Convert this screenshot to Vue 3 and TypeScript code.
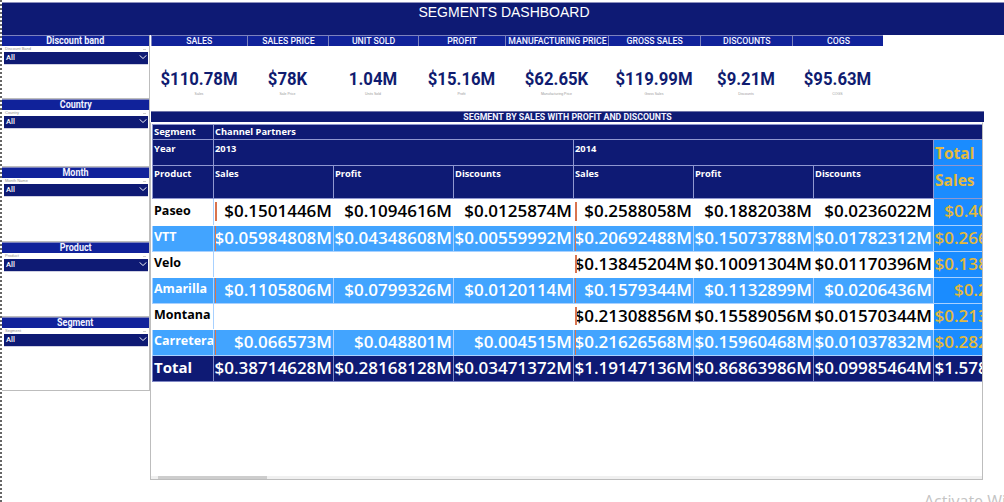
<script setup lang="ts">
interface Kpi {
  head: string
  value: string
  label: string
}

interface Row {
  name: string
  cells: string[]
  total: string
  alt?: boolean
}

const slicers = [
  { title: 'Discount band', label: 'Discount Band' },
  { title: 'Country', label: 'Country' },
  { title: 'Month', label: 'Month Name' },
  { title: 'Product', label: 'Product' },
  { title: 'Segment', label: 'Segment' }
]

const kpis: Kpi[] = [
  { head: 'SALES', value: '$110.78M', label: 'Sales' },
  { head: 'SALES PRICE', value: '$78K', label: 'Sale Price' },
  { head: 'UNIT SOLD', value: '1.04M', label: 'Units Sold' },
  { head: 'PROFIT', value: '$15.16M', label: 'Profit' },
  { head: 'MANUFACTURING PRICE', value: '$62.65K', label: 'Manufacturing Price' },
  { head: 'GROSS SALES', value: '$119.99M', label: 'Gross Sales' },
  { head: 'DISCOUNTS', value: '$9.21M', label: 'Discounts' },
  { head: 'COGS', value: '$95.63M', label: 'COGS' }
]

const measures = ['Sales', 'Profit', 'Discounts', 'Sales', 'Profit', 'Discounts']

const rows: Row[] = [
  { name: 'Paseo', cells: ['$0.1501446M', '$0.1094616M', '$0.0125874M', '$0.2588058M', '$0.1882038M', '$0.0236022M'], total: '$0.4089504M' },
  { name: 'VTT', alt: true, cells: ['$0.05984808M', '$0.04348608M', '$0.00559992M', '$0.20692488M', '$0.15073788M', '$0.01782312M'], total: '$0.26677296M' },
  { name: 'Velo', cells: ['', '', '', '$0.13845204M', '$0.10091304M', '$0.01170396M'], total: '$0.13845204M' },
  { name: 'Amarilla', alt: true, cells: ['$0.1105806M', '$0.0799326M', '$0.0120114M', '$0.1579344M', '$0.1132899M', '$0.0206436M'], total: '$0.268515M' },
  { name: 'Montana', cells: ['', '', '', '$0.21308856M', '$0.15589056M', '$0.01570344M'], total: '$0.21308856M' },
  { name: 'Carretera', alt: true, cells: ['$0.066573M', '$0.048801M', '$0.004515M', '$0.21626568M', '$0.15960468M', '$0.01037832M'], total: '$0.28283868M' }
]

const totals = ['$0.38714628M', '$0.28168128M', '$0.03471372M', '$1.19147136M', '$0.86863986M', '$0.09985464M']
</script>

<template>
  <div class="page">
    <header class="title">SEGMENTS DASHBOARD</header>

    <div class="body">
      <aside class="sidebar">
        <section v-for="s in slicers" :key="s.title" class="slicer">
          <h3 class="slicer-head"><span>{{ s.title }}</span></h3>
          <div class="slicer-label">
            <span>{{ s.label }}</span>
            <i></i>
          </div>
          <div class="select">
            <span>All</span>
            <svg viewBox="0 0 8 4" width="8" height="4" fill="none" aria-hidden="true">
              <path d="M0.5 0.3L4 3.5L7.5 0.3" stroke="currentColor" stroke-width="0.9" />
            </svg>
          </div>
        </section>
      </aside>

      <main class="main">
        <div class="kpis">
          <div v-for="k in kpis" :key="k.head" class="kpi">
            <div class="kpi-head"><span>{{ k.head }}</span></div>
            <div class="kpi-body">
              <div class="kpi-value">{{ k.value }}</div>
              <div class="kpi-label">{{ k.label }}</div>
            </div>
          </div>
        </div>

        <div class="matrix-title">SEGMENT BY SALES WITH PROFIT AND DISCOUNTS</div>

        <div class="matrix">
          <table>
            <colgroup>
              <col class="col-name" />
              <col v-for="n in 7" :key="n" class="col-val" />
            </colgroup>
            <thead>
              <tr class="h1">
                <th>Segment</th>
                <th colspan="7">Channel Partners</th>
              </tr>
              <tr class="h2">
                <th>Year</th>
                <th colspan="3">2013</th>
                <th colspan="3">2014</th>
                <th class="gold"><span>Total</span></th>
              </tr>
              <tr class="h3">
                <th>Product</th>
                <th v-for="(m, i) in measures" :key="i">{{ m }}</th>
                <th class="gold"><span>Sales</span></th>
              </tr>
            </thead>
            <tbody>
              <tr v-for="r in rows" :key="r.name" :class="{ alt: r.alt }">
                <td class="name">{{ r.name }}</td>
                <td
                  v-for="(c, i) in r.cells"
                  :key="i"
                  class="val"
                  :class="{ bar: i === 3 || (c && i === 0) }"
                >{{ c }}</td>
                <td class="val gold">{{ r.total }}</td>
              </tr>
              <tr class="grand">
                <td class="name">Total</td>
                <td v-for="(t, i) in totals" :key="i" class="val">{{ t }}</td>
                <td class="val">$1.57861764M</td>
              </tr>
            </tbody>
          </table>
          <div class="scrollbar"><i></i></div>
        </div>
      </main>
    </div>

    <div class="watermark">Activate Windows</div>
  </div>
</template>

<style scoped>
.page {
  position: relative;
  width: 1004px;
  height: 502px;
  box-sizing: border-box;
  padding-top: 2px;
  padding-left: 2px;
  background: repeating-linear-gradient(#666 0 2px, #fff 2px 4px) left top / 2px 100% no-repeat #fff;
  overflow: hidden;
  font-family: 'Open Sans', 'Liberation Sans', sans-serif;
}

.title {
  height: 33px;
  box-sizing: border-box;
  padding: 1px 0 0 2px;
  border-top: 1px solid #8d90bd;
  background: #0e1a74;
  color: #fff;
  font: 14px/17px 'Liberation Sans', sans-serif;
  text-align: center;
}

.body {
  display: flex;
}

.sidebar {
  display: grid;
  grid-template-rows: 64px 68px 75px 75px 74px;
  width: 148px;
  height: 356px;
  flex: none;
}

.slicer {
  box-sizing: border-box;
  border: 1px solid #bdbdbd;
  border-top: 0;
  border-left: 0;
  background: #fff;
}

.slicer-head {
  display: flex;
  justify-content: center;
  height: 10px;
  margin: 0;
  background: #10229a;
  border-top: 1px solid #7c82bd;
  color: #f2f3ff;
  font: 700 10px/10px Roboto, sans-serif;
}

.slicer-head span {
  flex: none;
  transform: scaleX(0.9);
}

.slicer-label {
  display: flex;
  justify-content: space-between;
  align-items: center;
  height: 6px;
  padding: 0 3px;
  color: #8e8e8e;
  font: 4px/6px 'Liberation Sans', sans-serif;
}

.slicer-label i {
  width: 3px;
  height: 1px;
  background: #cfcfcf;
}

.select {
  display: flex;
  justify-content: space-between;
  align-items: center;
  box-sizing: border-box;
  height: 13px;
  margin: 0 1px 0 2px;
  padding: 0 1px 0 2px;
  background: #0e1a74;
  border-bottom: 1px solid #cfd0e2;
  color: #fff;
  font: 500 7.5px/12px Roboto, sans-serif;
}

.select svg {
  margin-bottom: 3px;
}

.main {
  flex: 1;
  min-width: 0;
  padding-left: 1px;
}

.kpis {
  display: grid;
  grid-template-columns: 96px 81px 90px 87px 103px 92px 92px 91px;
  width: 732px;
  height: 76px;
}

.kpi-head {
  display: flex;
  justify-content: center;
  box-sizing: border-box;
  height: 11px;
  background: #10229a;
  border-top: 1px solid #7c82bd;
  border-left: 1px solid #7c82bd;
  color: #f2f3ff;
  font: 500 9.5px/10px Roboto, sans-serif;
  white-space: nowrap;
}

.kpi-head span {
  flex: none;
  transform: scaleX(0.92);
}

.kpi-body {
  padding-top: 21px;
  text-align: center;
}

.kpi-value {
  color: #101c70;
  font: 700 19px/24px Roboto, sans-serif;
  transform: scaleX(0.88);
}

.kpi-label {
  margin-top: 1px;
  color: #9a9a9a;
  font: 3.5px/5px 'Liberation Sans', sans-serif;
}

.matrix-title {
  box-sizing: border-box;
  width: 833px;
  height: 11px;
  background: #0e1a74;
  border-top: 1px solid #6f74a8;
  color: #f2f3ff;
  font: 700 8.8px/10px Roboto, sans-serif;
  text-align: center;
}

.matrix {
  position: relative;
  box-sizing: border-box;
  width: 833px;
  height: 358px;
  margin-left: -1px;
  padding: 1px 0 0 1px;
  border: 1px solid #bdbdbd;
  border-top: 1px solid #fff;
  overflow: hidden;
}

table {
  width: 901px;
  table-layout: fixed;
  border-collapse: collapse;
}

.col-name {
  width: 61px;
}

.col-val {
  width: 120px;
}

th {
  padding: 3px 1px 0;
  background: #0e1a74;
  border: 1px solid #8f97d0;
  color: #fff;
  font-size: 9.3px;
  font-weight: 700;
  line-height: 12px;
  text-align: left;
  vertical-align: top;
}

.h1 {
  height: 15px;
}

.h1 th {
  padding-top: 1px;
}

.h3 th {
  padding-top: 2px;
}

.h1 th:first-child,
.h2 th:first-child,
.h3 th:first-child {
  font-size: 9.5px;
}

.h2 {
  height: 26px;
}

.h3 {
  height: 33px;
}

th.gold {
  padding-top: 4px;
  background: #1a8cff;
  color: #e4b93c;
  font-size: 15.5px;
  line-height: 20px;
}

.h2 th.gold {
  padding-top: 3px;
}

td {
  height: 22px;
  padding: 0;
  border: 1px solid #fff;
  border-width: 0 1px 1px;
  line-height: 20px;
  white-space: nowrap;
  overflow: hidden;
}

tbody tr:first-child td {
  height: 23px;
}

.name {
  padding: 0 0 3px 1px;
  border-right-color: #a8d1ff;
  color: #000;
  font-size: 12.5px;
  font-weight: 700;
}

.val {
  position: relative;
  padding: 0 1px 2px 0;
  color: #000;
  font-size: 17px;
  font-weight: 600;
  text-align: right;
}

.alt td {
  background: #42a4ff;
  border-color: #a8d1ff;
  color: #fff;
}

.bar::before {
  content: '';
  position: absolute;
  left: 1px;
  top: 3px;
  bottom: 4px;
  width: 2px;
  background: #d9734e;
}

.alt .bar::before {
  width: 1px;
  top: 0;
  bottom: 0;
}

td.gold,
.alt td.gold {
  background: #1a8cff;
  border-color: #a8d1ff;
  color: #e4b93c;
}

.grand td {
  background: #0e1a74;
  border-color: #7f87c4;
  color: #fff;
}

.grand .name {
  font-size: 15px;
}

.scrollbar {
  position: absolute;
  left: 0;
  right: 0;
  bottom: 0;
  height: 3px;
  background: #f0f0f0;
}

.scrollbar i {
  position: absolute;
  left: 7px;
  top: 0;
  width: 109px;
  height: 3px;
  background: #cdcdcd;
}

.watermark {
  position: absolute;
  left: 924px;
  top: 491px;
  color: #c4c4c4;
  font-size: 16px;
  line-height: 20px;
  white-space: nowrap;
}
</style>

<style>
body {
  margin: 0;
}
</style>
